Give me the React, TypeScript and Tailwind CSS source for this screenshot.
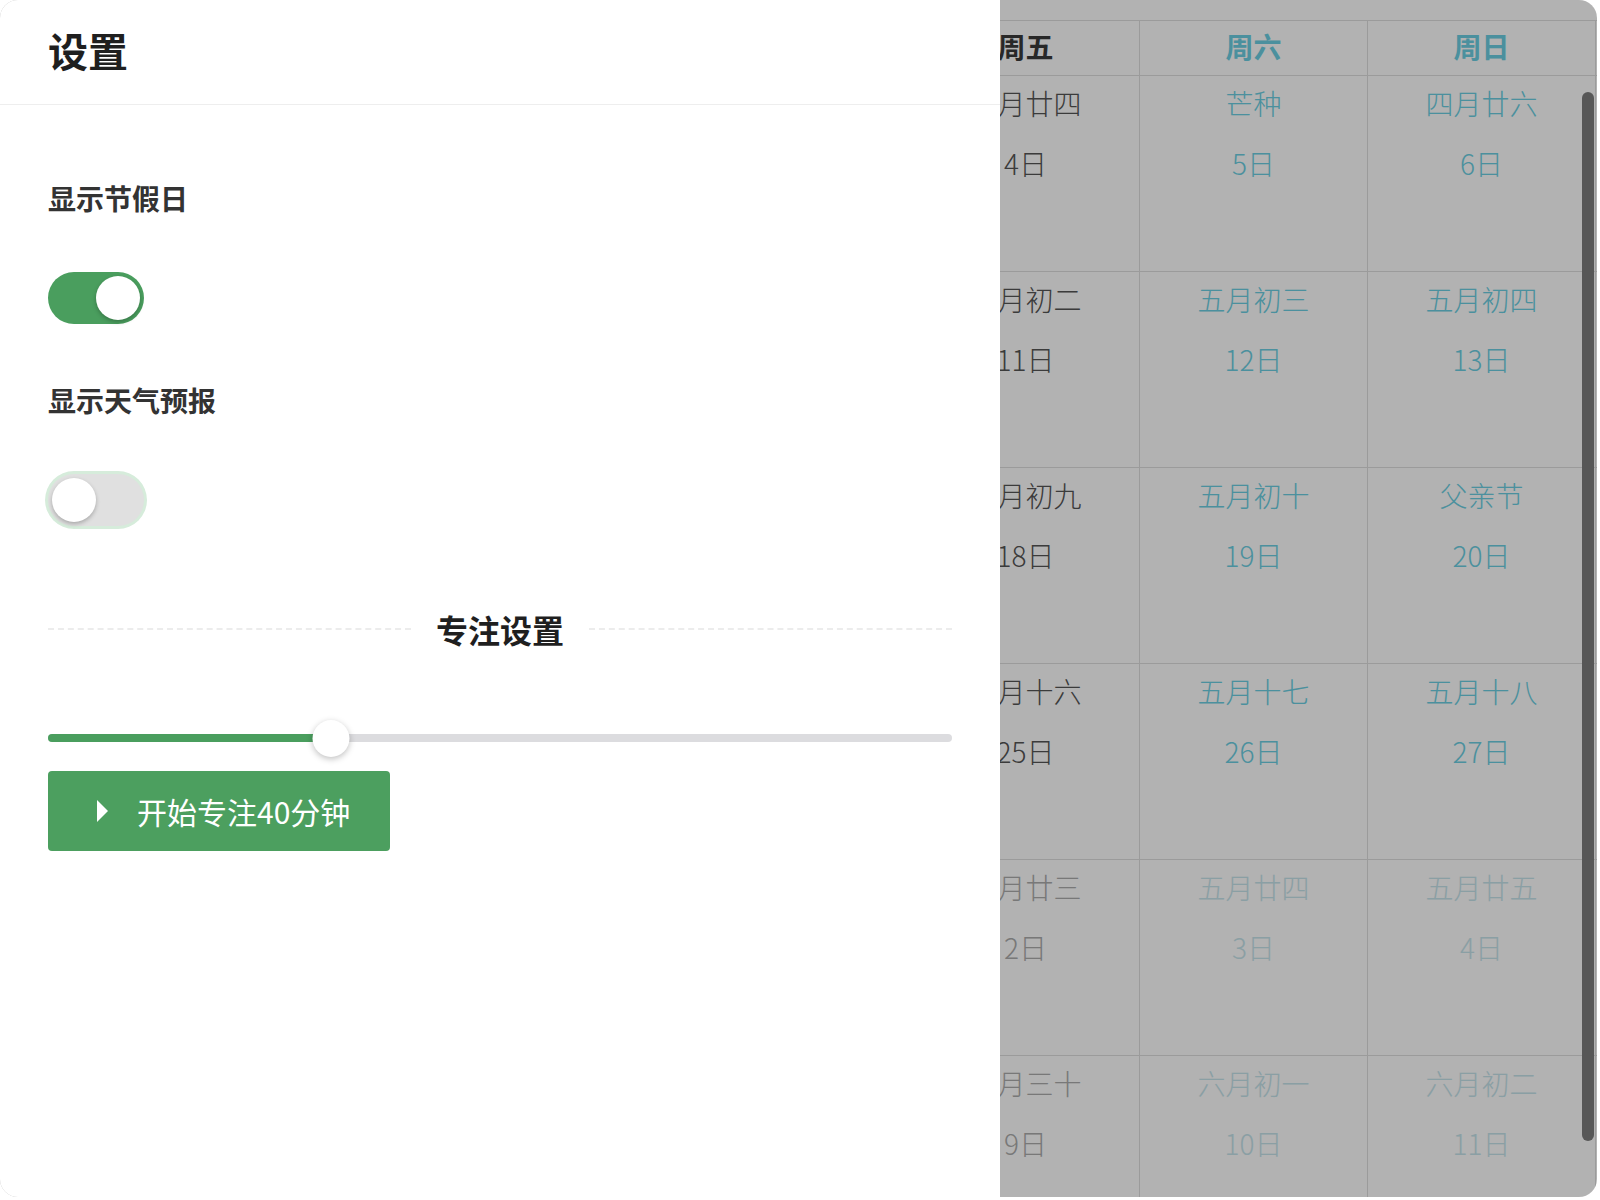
import React from "react";

type Cell = { day: string; lunar: string; weekend: boolean; other: boolean };

const weekdays = ["周一", "周二", "周三", "周四", "周五", "周六", "周日"];

const weeks: [string, string, boolean][][] = [
  [["31日", "四月二十", true], ["1日", "儿童节", false], ["2日", "四月廿二", false], ["3日", "四月廿三", false], ["4日", "四月廿四", false], ["5日", "芒种", false], ["6日", "四月廿六", false]],
  [["7日", "四月廿七", false], ["8日", "四月廿八", false], ["9日", "四月廿九", false], ["10日", "五月初一", false], ["11日", "五月初二", false], ["12日", "五月初三", false], ["13日", "五月初四", false]],
  [["14日", "端午节", false], ["15日", "五月初六", false], ["16日", "五月初七", false], ["17日", "五月初八", false], ["18日", "五月初九", false], ["19日", "五月初十", false], ["20日", "父亲节", false]],
  [["21日", "夏至", false], ["22日", "五月十三", false], ["23日", "五月十四", false], ["24日", "五月十五", false], ["25日", "五月十六", false], ["26日", "五月十七", false], ["27日", "五月十八", false]],
  [["28日", "五月十九", false], ["29日", "五月二十", false], ["30日", "五月廿一", false], ["1日", "建党节", true], ["2日", "五月廿三", true], ["3日", "五月廿四", true], ["4日", "五月廿五", true]],
  [["5日", "五月廿六", true], ["6日", "五月廿七", true], ["7日", "小暑", true], ["8日", "五月廿九", true], ["9日", "五月三十", true], ["10日", "六月初一", true], ["11日", "六月初二", true]],
];

const rows: Cell[][] = weeks.map((w) =>
  w.map(([day, lunar, other], i) => ({ day, lunar, other, weekend: i >= 5 }))
);

function cellColor(c: Cell) {
  if (c.other) return c.weekend ? "text-[#c6e4eb]" : "text-[#acacac]";
  return c.weekend ? "text-[#6ccfe2]" : "text-[#555555]";
}

function Calendar() {
  return (
    <div className="relative h-full bg-white pt-[20px] font-['Noto_Sans_CJK_SC',sans-serif]">
      <div className="grid h-[56px] grid-cols-[repeat(7,228px)] border-y border-[#dfdfdf]">
        {weekdays.map((d, i) => (
          <div
            key={d}
            className={`flex items-center justify-center border-r border-[#dfdfdf] pb-[5px] text-[28px] font-semibold ${
              i >= 5 ? "text-[#6ccfe2]" : "text-[#3a3a3a]"
            }`}
          >
            {d}
          </div>
        ))}
      </div>
      {rows.map((row, r) => (
        <div key={r} className="grid h-[196px] grid-cols-[repeat(7,228px)] border-b border-[#dfdfdf]">
          {row.map((c, i) => (
            <div
              key={i}
              className={`flex flex-col items-center gap-[18px] border-r border-[#dfdfdf] pt-[6px] text-[28px] leading-[42px] font-light ${cellColor(c)}`}
            >
              <span>{c.lunar}</span>
              <span>{c.day}</span>
            </div>
          ))}
        </div>
      ))}
      <div className="absolute left-[1582px] top-[92px] h-[1049px] w-[12px] rounded-full bg-[#7d7d7d]" />
    </div>
  );
}

function Toggle({ on, focused }: { on: boolean; focused?: boolean }) {
  return (
    <div
      className={`flex h-[52px] w-[96px] items-center rounded-full p-[4px] ${
        on ? "justify-end bg-[#4a9e5e]" : "justify-start bg-[#e0e0e0]"
      } ${focused ? "ring-[3px] ring-[#d6ecdb]" : ""}`}
    >
      <div className="h-[44px] w-[44px] rounded-full bg-white shadow-[0_2px_4px_rgba(0,0,0,0.25)]" />
    </div>
  );
}

function Drawer() {
  const value = 31.3;
  return (
    <div className="absolute inset-y-0 left-0 flex w-[1000px] flex-col bg-white font-['Noto_Sans_CJK_SC',sans-serif]">
      <div className="flex h-[105px] items-center border-b border-[#eeeeee] px-12 pb-[4px]">
        <h2 className="text-[40px] font-semibold text-[#1f1f1f]">设置</h2>
      </div>
      <div className="flex flex-col px-12 pt-[72px]">
        <div className="text-[28px] leading-[42px] font-semibold text-[#333333]">显示节假日</div>
        <div className="mt-[53px]">
          <Toggle on />
        </div>
        <div className="mt-[55px] text-[28px] leading-[42px] font-semibold text-[#333333]">显示天气预报</div>
        <div className="mt-[53px]">
          <Toggle on={false} focused />
        </div>
        <div className="mt-[79px] flex items-center gap-[25px]">
          <div className="flex-1 border-t-2 border-dashed border-[#ececec]" />
          <span className="text-[32px] leading-[48px] font-semibold text-[#1f1f1f]">专注设置</span>
          <div className="flex-1 border-t-2 border-dashed border-[#ececec]" />
        </div>
        <div className="relative mt-[67px] h-[37px]">
          <div className="absolute inset-x-0 top-[14px] h-[8px] rounded-full bg-[#dcdcdf]" />
          <div className="absolute left-0 top-[14px] h-[8px] rounded-full bg-[#4a9e5e]" style={{ width: `${value}%` }} />
          <div
            className="absolute top-0 h-[37px] w-[37px] -translate-x-1/2 rounded-full bg-white shadow-[0_2px_6px_rgba(0,0,0,0.25)]"
            style={{ left: `${value}%` }}
          />
        </div>
        <button className="mt-[14px] flex h-[80px] w-[342px] items-center gap-[29px] rounded-[4px] bg-[#4c9f5f] pl-[49px] text-[30px] text-white">
          <svg width="11" height="22" viewBox="0 0 11 22">
            <polygon points="0,0 11,11 0,22" fill="white" />
          </svg>
          <span>开始专注40分钟</span>
        </button>
      </div>
    </div>
  );
}

export default function App() {
  return (
    <div className="h-[1200px] w-[1600px] bg-white">
      <div className="relative h-[1197px] w-[1597px] overflow-hidden rounded-[18px]">
        <Calendar />
        <div className="absolute inset-0 bg-black/30" />
        <Drawer />
      </div>
    </div>
  );
}
